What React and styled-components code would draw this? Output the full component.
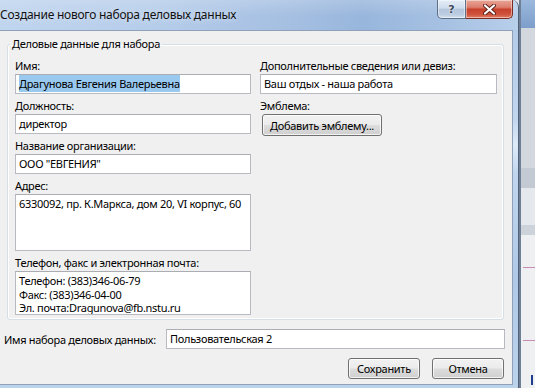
import React from 'react';
import styled, { createGlobalStyle } from 'styled-components';

const Global = createGlobalStyle`
  html, body { margin: 0; padding: 0; width: 535px; height: 388px; overflow: hidden; }
  body {
    font-family: "Segoe UI", "Noto Sans", "Open Sans", sans-serif;
    font-size: 11px;
    letter-spacing: -0.3px;
    color: #000;
    background: #dfe3e8;
  }
  * { box-sizing: border-box; }
`;

const Desktop = styled.div`
  display: flex;
  width: 535px;
  height: 388px;
  overflow: hidden;
  background: #e4e7eb;
`;

const Window = styled.div`
  flex: none;
  width: 519px;
  height: 388px;
  display: flex;
  flex-direction: column;
  border-right: 1px solid #50617a;
  border-top-right-radius: 7px;
  background:
    linear-gradient(180deg, rgba(255,255,255,0.18) 0px, rgba(255,255,255,0) 16px),
    linear-gradient(90deg, #c0d5ee 0%, #b6cdea 30%, #a6c0e2 55%, #98b6dc 70%, #a5c0e2 85%, #b8cfea 100%);
  overflow: hidden;
`;

const TitleBar = styled.div`
  flex: none;
  height: 30px;
  display: flex;
  justify-content: space-between;
  align-items: flex-start;
  padding-right: 5px;
`;

const Title = styled.div`
  line-height: 30px;
  font-size: 12px;
  letter-spacing: -0.25px;
  color: #111;
  white-space: nowrap;
  text-shadow: 0 0 6px rgba(255,255,255,0.7);
`;

const Caption = styled.div`
  display: flex;
  height: 19px;
`;

const CaptionButton = styled.div`
  height: 19px;
  width: ${p => p.$w}px;
  display: flex;
  align-items: center;
  justify-content: center;
  border: 1px solid ${p => (p.$close ? '#7a2c24' : '#5e6f88')};
  border-top: none;
  ${p => (p.$close
    ? 'border-left: none; border-bottom-right-radius: 5px;'
    : 'border-bottom-left-radius: 5px;')}
  background: ${p => (p.$close
    ? 'linear-gradient(180deg, #e9a596 0%, #dc7f6e 40%, #c8412c 52%, #d0523d 80%, #e07f62 100%)'
    : 'linear-gradient(180deg, #e4edf7 0%, #cfdcec 45%, #b5c6dc 52%, #bccde2 80%, #d3e1ef 100%)')};
  box-shadow: inset 0 0 0 1px rgba(255,255,255,0.45);
  color: #3b4a5e;
  font-family: "DejaVu Sans", sans-serif;
  font-weight: bold;
  font-size: 11px;
  letter-spacing: 0;
  text-shadow: 0 0 2px #fff;
`;

const Body = styled.div`
  flex: 1;
  display: flex;
  padding: 0 5px 4px 0;
  background: linear-gradient(180deg, #b3cbe8 0%, #c2d7ee 25%, #deebf8 32%, #c0d6ee 40%, #b0c9e7 70%, #bcd3ec 100%);
`;

const Client = styled.div`
  flex: 1;
  display: flex;
  flex-direction: column;
  background: #f0f0f0;
  border-top: 1px solid #8fa1b8;
  border-right: 1px solid #8fa1b8;
  border-bottom: 1px solid #8fa1b8;
  padding: 5px 7px 5px 0;
`;

const Group = styled.fieldset`
  margin: 0 1px 0 7px;
  padding: 5px 6px 4px 7px;
  border: 1px solid #d5dfe5;
  border-radius: 3px;
  box-shadow: inset 0 0 0 1px #fff;
  min-width: 0;
`;

const Legend = styled.legend`
  margin-left: -5px;
  padding: 0 2px;
  line-height: 16px;
`;

const Columns = styled.div`
  display: grid;
  grid-template-columns: 236px 237px;
  column-gap: 9px;
`;

const Column = styled.div`
  display: flex;
  flex-direction: column;
  gap: 3px;
`;

const Field = styled.div`
  display: flex;
  flex-direction: column;
`;

const Label = styled.div`
  line-height: 17px;
  white-space: nowrap;
`;

const TextBox = styled.div`
  height: ${p => p.$h || 20}px;
  background: #fff;
  border: 1px solid #b7bac0;
  border-top-color: #abadb3;
  padding: ${p => (p.$multi ? '2px 3px' : '0 3px')};
  line-height: ${p => (p.$multi ? '13.5px' : '18px')};
  white-space: pre;
  overflow: hidden;
`;

const Selected = styled.span`
  background: #99c9ef;
  padding: 1px 0;
`;

const Button = styled.div`
  width: ${p => p.$w}px;
  height: ${p => p.$h || 21}px;
  margin-left: ${p => p.$ml || 0}px;
  display: flex;
  align-items: center;
  justify-content: center;
  border: 1px solid #707070;
  border-radius: 3px;
  background: linear-gradient(180deg, #f2f2f2 0%, #ebebeb 48%, #dddddd 52%, #cfcfcf 100%);
  box-shadow: inset 0 0 0 1px rgba(255,255,255,0.75);
  white-space: nowrap;
`;

const NameRow = styled.div`
  display: grid;
  grid-template-columns: 162px 1fr;
  align-items: center;
  margin-top: 9px;
  padding-left: 4px;
`;

const Actions = styled.div`
  display: flex;
  justify-content: flex-end;
  gap: 12px;
  margin-top: 9px;
  padding-right: 1px;
`;

const Backdrop = styled.div`
  flex: 1;
  display: flex;
  flex-direction: column;
  border-left: 2px solid #6f7f95;
`;

const Band = styled.div`
  flex: ${p => (p.$h ? 'none' : 1)};
  height: ${p => p.$h || 0}px;
  background: ${p => p.$c};
  position: relative;
`;

const PinkLine = styled.div`
  position: absolute;
  left: 2px;
  right: 0;
  top: ${p => p.$y}px;
  height: 1px;
  background: #c98bb6;
`;

const Glyph = styled.div`
  position: absolute;
  left: 10px;
  top: ${p => p.$y}px;
  width: 2px;
  height: 10px;
  background: #1f3e8f;
`;

function CloseIcon() {
  return (
    <svg width="13" height="11" viewBox="0 0 13 11">
      <path d="M2 1.5 L11 9.5 M11 1.5 L2 9.5" stroke="#5a1e16" strokeWidth="4" strokeLinecap="round" />
      <path d="M2 1.5 L11 9.5 M11 1.5 L2 9.5" stroke="#fff" strokeWidth="2.2" strokeLinecap="round" />
    </svg>
  );
}

export default function App() {
  return (
    <>
      <Global />
      <Desktop>
        <Window>
          <TitleBar>
            <Title>Создание нового набора деловых данных</Title>
            <Caption>
              <CaptionButton $w={29}>?</CaptionButton>
              <CaptionButton $w={47} $close>
                <CloseIcon />
              </CaptionButton>
            </Caption>
          </TitleBar>
          <Body>
            <Client>
              <Group>
                <Legend>Деловые данные для набора</Legend>
                <Columns>
                  <Column>
                    <Field>
                      <Label>Имя:</Label>
                      <TextBox><Selected>Драгунова Евгения Валерьевна</Selected></TextBox>
                    </Field>
                    <Field>
                      <Label>Должность:</Label>
                      <TextBox>директор</TextBox>
                    </Field>
                    <Field>
                      <Label>Название организации:</Label>
                      <TextBox>ООО "ЕВГЕНИЯ"</TextBox>
                    </Field>
                    <Field>
                      <Label>Адрес:</Label>
                      <TextBox $multi $h={57}>6330092, пр. К.Маркса, дом 20, VI корпус, 60</TextBox>
                    </Field>
                    <Field>
                      <Label>Телефон, факс и электронная почта:</Label>
                      <TextBox $multi $h={44}>{'Телефон: (383)346-06-79\nФакс: (383)346-04-00\nЭл. почта:Dragunova@fb.nstu.ru'}</TextBox>
                    </Field>
                  </Column>
                  <Column>
                    <Field>
                      <Label>Дополнительные сведения или девиз:</Label>
                      <TextBox>Ваш отдых - наша работа</TextBox>
                    </Field>
                    <Field>
                      <Label>Эмблема:</Label>
                      <Button $w={120} $h={22} $ml={2}>Добавить эмблему...</Button>
                    </Field>
                  </Column>
                </Columns>
              </Group>
              <NameRow>
                <Label>Имя набора деловых данных:</Label>
                <TextBox>Пользовательская 2</TextBox>
              </NameRow>
              <Actions>
                <Button $w={72}>Сохранить</Button>
                <Button $w={72}>Отмена</Button>
              </Actions>
            </Client>
          </Body>
        </Window>
        <Backdrop>
          <Band $h={28} $c="linear-gradient(180deg, #9cb8dc, #7d9ecb)" />
          <Band $h={140} $c="#d3d8de" />
          <Band $h={20} $c="#c3cad3" />
          <Band $h={37} $c="#e5e8ec" />
          <Band $h={10} $c="#cdd3da" />
          <Band $c="#eef0f2">
            <PinkLine $y={32} />
            <PinkLine $y={105} />
            <Glyph $y={140} />
          </Band>
        </Backdrop>
      </Desktop>
    </>
  );
}
